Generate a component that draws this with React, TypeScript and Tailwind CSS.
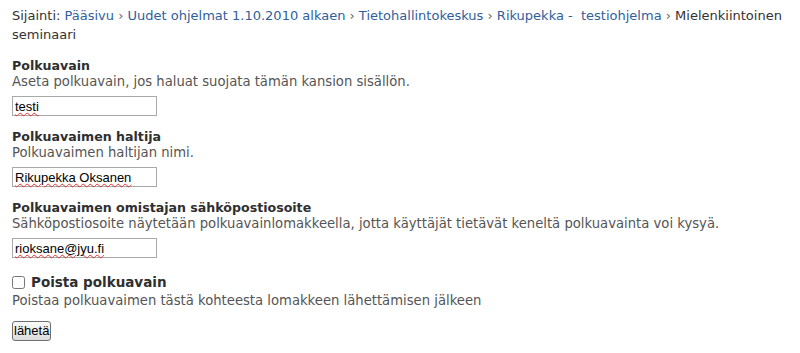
import { Fragment, useState } from 'react'

const crumbs = [
    'Pääsivu',
    'Uudet ohjelmat 1.10.2010 alkaen',
    'Tietohallintokeskus',
    'Rikupekka -\u00a0 testiohjelma',
]

const arial = { fontFamily: '"Liberation Sans", Arial, sans-serif' }

function Field({ label, help, value }: { label: string; help: string; value: string }) {
    return (
        <div className="mb-[13px]">
            <h3 className="text-[12.6px] leading-[16px] font-bold text-[#2f2f2f]">{label}</h3>
            <p className="text-[13.2px] leading-[16px] text-[#555555] mb-[6px]">{help}</p>
            <div className="relative w-[145px] h-[20px]">
                <input
                    type="text"
                    defaultValue={value}
                    spellCheck={false}
                    className="block w-[145px] h-[20px] border border-[#a9a9a9] bg-white px-[2px] text-[13px] text-black focus:outline-none"
                    style={arial}
                />
                {/* spellcheck squiggle */}
                <span
                    className="absolute left-[3px] top-[2px] text-[13px] leading-[15px] text-transparent underline decoration-wavy decoration-[#e03030] decoration-1 underline-offset-[2px] pointer-events-none whitespace-pre"
                    style={arial}
                >
                    {value}
                </span>
            </div>
        </div>
    )
}

export default function App() {
    const [remove, setRemove] = useState(false)

    return (
        <div
            className="w-[800px] h-[353px] bg-white pl-[12px] pr-[6px] pt-[6px]"
            style={{ fontFamily: '"DejaVu Sans", Verdana, sans-serif' }}
        >
            <div className="text-[13px] leading-[19px] text-[#333333] mb-[14px]">
                <span>Sijainti: </span>
                {crumbs.map((c) => (
                    <Fragment key={c}>
                        <a href="#" className="text-[#2f5f9c]">{c}</a>
                        <span className="text-[#666666]"> › </span>
                    </Fragment>
                ))}
                <span>Mielenkiintoinen</span> <span>seminaari</span>
            </div>

            <form onSubmit={(e) => e.preventDefault()}>
                <Field
                    label="Polkuavain"
                    help="Aseta polkuavain, jos haluat suojata tämän kansion sisällön."
                    value="testi"
                />
                <Field label="Polkuavaimen haltija" help="Polkuavaimen haltijan nimi." value="Rikupekka Oksanen" />
                <Field
                    label="Polkuavaimen omistajan sähköpostiosoite"
                    help="Sähköpostiosoite näytetään polkuavainlomakkeella, jotta käyttäjät tietävät keneltä polkuavainta voi kysyä."
                    value="rioksane@jyu.fi"
                />

                <label className="flex items-center gap-[6px] h-[22px]">
                    <input
                        type="checkbox"
                        checked={remove}
                        onChange={() => setRemove(!remove)}
                        className="w-[13px] h-[13px] m-0"
                    />
                    <span className="text-[13.5px] font-bold text-[#2f2f2f]">Poista polkuavain</span>
                </label>
                <p className="text-[13.2px] leading-[16px] text-[#555555] mb-[9px]">
                    Poistaa polkuavaimen tästä kohteesta lomakkeen lähettämisen jälkeen
                </p>

                <button
                    type="submit"
                    className="h-[20px] px-[1px] border border-[#6f6f6f] rounded-[3px] bg-gradient-to-b from-[#fafafa] to-[#dcdcdc] text-[13px] leading-[15px] text-black"
                    style={arial}
                >
                    lähetä
                </button>
            </form>
        </div>
    )
}
